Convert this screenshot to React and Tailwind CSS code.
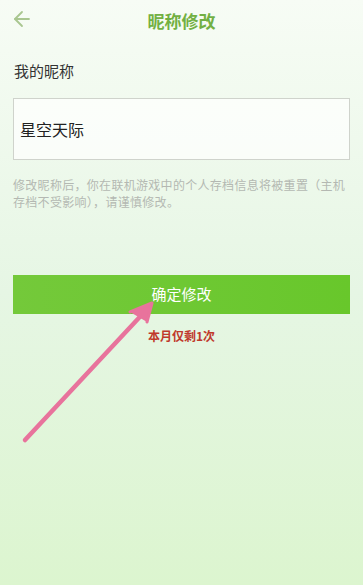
import { ArrowLeft } from 'lucide-react';

const App = () => {
  return (
    <div
      className="relative w-[363px] h-[585px] overflow-hidden bg-gradient-to-b from-[#f7fcf5] via-[#e6f6e4] to-[#dcf5cf]"
      style={{ fontFamily: '"Noto Sans CJK SC", "Noto Sans", sans-serif' }}
    >
      <div className="h-[40px] flex items-center relative">
        <button className="absolute left-[10px] top-[7px] text-[#a9c690]">
          <ArrowLeft size={24} strokeWidth={1.8} />
        </button>
        <h1 className="w-full text-center text-[17px] font-bold text-[#72b043] leading-none pt-[1px]">
          昵称修改
        </h1>
      </div>

      <div className="px-[13px]">
        <p className="mt-[23px] text-[15px] text-[#333] leading-none pl-[1px]">我的昵称</p>

        <div className="mt-[20px] h-[62px] border border-[#cfd3cc] bg-white/70 flex items-center px-[6px]">
          <span className="text-[16px] text-[#222]">星空天际</span>
        </div>

        <p className="mt-[16px] text-[12px] leading-[17px] text-[#b4b8b2] tracking-[0.3px]">
          修改昵称后，你在联机游戏中的个人存档信息将被重置（主机
          <br />
          存档不受影响），请谨慎修改。
        </p>

        <button className="mt-[65px] w-full h-[39px] bg-gradient-to-r from-[#74c93a] to-[#68c72b] text-white text-[15px] flex items-center justify-center">
          确定修改
        </button>

        <p className="mt-[16px] text-center text-[12px] font-bold text-[#c0392b] leading-none">
          本月仅剩1次
        </p>
      </div>

      <svg className="absolute left-0 top-0 pointer-events-none" width="363" height="585">
        <g stroke="#e8739c" strokeWidth="4.5" strokeLinecap="round" strokeLinejoin="round" fill="none">
          <line x1="25" y1="440" x2="150" y2="306" />
          <polyline points="130,312 152,303 147,322" fill="#e8739c" strokeWidth="3" />
        </g>
      </svg>
    </div>
  );
};

export default App;
